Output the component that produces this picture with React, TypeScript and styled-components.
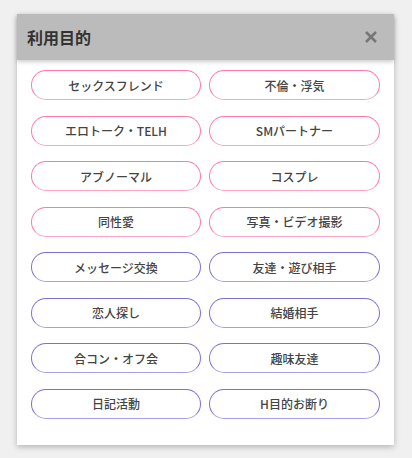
import styled, { createGlobalStyle } from 'styled-components';

const Global = createGlobalStyle`
  html, body {
    margin: 0;
    background: #f0f0f0;
    font-family: "Noto Sans CJK JP", "Noto Sans", sans-serif;
  }
`;

const Page = styled.div`
  padding: 14px 18px 14px 17px;
`;

const Panel = styled.div`
  width: 377px;
  background: #fff;
  box-shadow: 0 2px 6px rgba(0, 0, 0, 0.25);
`;

const Header = styled.div`
  height: 46px;
  background: #bbbbbb;
  display: flex;
  align-items: center;
  justify-content: space-between;
  padding: 0 16px 0 10px;
  box-shadow: 0 2px 4px rgba(0, 0, 0, 0.2);
  position: relative;
`;

const Title = styled.h2`
  margin: 0;
  font-size: 16px;
  font-weight: 700;
  color: #333;
`;

const Close = styled.button`
  border: 0;
  background: none;
  padding: 0;
  width: 14px;
  height: 14px;
  display: flex;
  color: #777;
  cursor: pointer;
`;

const Grid = styled.div`
  display: grid;
  grid-template-columns: 170px 171px;
  column-gap: 8px;
  row-gap: 15.5px;
  padding: 10px 14px 26px 14px;
`;

const Tag = styled.button<{ $tone: 'pink' | 'purple' }>`
  height: 30px;
  border-radius: 15px;
  background: #fff;
  border: 1px solid ${(p) => (p.$tone === 'pink' ? '#ff78a6' : '#7a70d8')};
  border-bottom-color: ${(p) => (p.$tone === 'pink' ? '#ffa3c3' : '#a69fe6')};
  font-family: "Noto Sans CJK JP", sans-serif;
  font-size: 12px;
  font-weight: 500;
  color: #444;
  padding: 0;
  cursor: pointer;
`;

const pink = [
  'セックスフレンド',
  '不倫・浮気',
  'エロトーク・TELH',
  'SMパートナー',
  'アブノーマル',
  'コスプレ',
  '同性愛',
  '写真・ビデオ撮影',
];

const purple = [
  'メッセージ交換',
  '友達・遊び相手',
  '恋人探し',
  '結婚相手',
  '合コン・オフ会',
  '趣味友達',
  '日記活動',
  'H目的お断り',
];

export default function App() {
  return (
    <Page>
      <Global />
      <Panel>
        <Header>
          <Title>利用目的</Title>
          <Close aria-label="close">
            <svg width="14" height="14" viewBox="0 0 14 14">
              <path d="M2 2 L12 12 M12 2 L2 12" stroke="currentColor" strokeWidth="2.6" />
            </svg>
          </Close>
        </Header>
        <Grid>
          {pink.map((t) => (
            <Tag key={t} $tone="pink">{t}</Tag>
          ))}
          {purple.map((t) => (
            <Tag key={t} $tone="purple">{t}</Tag>
          ))}
        </Grid>
      </Panel>
    </Page>
  );
}
